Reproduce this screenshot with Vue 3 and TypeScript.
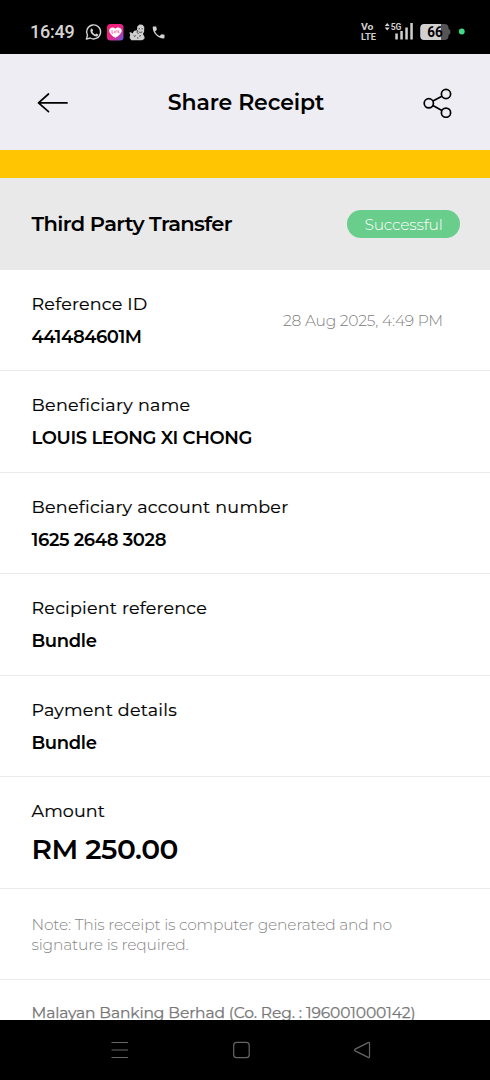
<script setup lang="ts">
import type { Directive } from 'vue'

interface Detail {
  label: string
  labelWidth: number
  value: string
  valueWidth: number
  date?: string
}

const details: Detail[] = [
  { label: 'Reference ID', labelWidth: 116, value: '441484601M', valueWidth: 110, date: '28 Aug 2025, 4:49 PM' },
  { label: 'Beneficiary name', labelWidth: 159, value: 'LOUIS LEONG XI CHONG', valueWidth: 220.5 },
  { label: 'Beneficiary account number', labelWidth: 257, value: '1625 2648 3028', valueWidth: 134.5 },
  { label: 'Recipient reference', labelWidth: 175.5, value: 'Bundle', valueWidth: 65 },
  { label: 'Payment details', labelWidth: 145.5, value: 'Bundle', valueWidth: 65 },
]

// Tracks a line of text so that it spans the given width.
const vFit: Directive<HTMLElement, number> = {
  mounted(el, { value }) {
    const count = el.textContent?.length || 1
    el.style.letterSpacing = `${(value - el.getBoundingClientRect().width) / count}px`
  },
}
</script>

<template>
  <div class="screen">
    <div class="status">
      <span v-fit="44.5" class="fit clock">16:49</span>
      <svg class="status-left" width="84" height="20" viewBox="84 21.500 84 20">
        <path d="M86.4 38.6l1.1-3.8a7 7 0 1 1 2.7 2.7z" fill="none" stroke="#d2d2d2" stroke-width="1.4" stroke-linejoin="round" />
        <path d="M91 28.2c.5-.5 1.1-.4 1.4.2l.7 1.5c.1.4-.6 1-.7 1.3.5 1.2 1.5 2.1 2.8 2.7.5-.1.9-1.1 1.3-.9l1.7.9c.4.5-.5 2-1.6 2.1-2.7.1-6.2-3.2-6.2-5.7 0-.8.2-1.6.6-2.1z" fill="#d2d2d2" />
        <defs>
          <linearGradient id="heart-bg" x1="0" y1="0" x2="1" y2="1">
            <stop offset="0.35" stop-color="#f51e7b" />
            <stop offset="0.7" stop-color="#c832a0" />
            <stop offset="1" stop-color="#4b62ee" />
          </linearGradient>
        </defs>
        <rect x="107" y="23.500" width="16.500" height="16.500" rx="3.500" fill="url(#heart-bg)" />
        <path d="M115.300 37.300c-2-1.300-5.900-3.900-6.200-7.100-.2-3 4-4.600 6.200-2 2.200-2.600 6.600-1 6.400 2-.2 3.200-4.300 5.800-6.400 7.100z" fill="#fff" />
        <path d="M112 29.500v3.200h1.300m1-2.300v2.300m1.500-2.300v2.300m0-2.300h1.300m1-1v3.300m1.300-2.500l-1 1 1 1.500" fill="none" stroke="#ed4d9b" stroke-width=".7" />
        <path d="M137 29.500l.3-3.500 2.200-1.900 3 .2 1.800 2.200-.2 4.700-1.200 2.300 1.500 2.500.1 2.200-2.400 1.500h-10.800l-1.700-2.500.6-3-.9-2.200 1.600-.2 1.600 1.300 1.500-2.600 1.500-.6z" fill="#d0d0d0" />
        <path d="M138.600 28.300h1.400m1.500 0h1.200M138.600 31.300c1.300.8 2.600.8 3.700 0M137.300 29.500v2.700l1.300 1.400M133.600 35l1.200 1 1-1.200M139.200 35.800l1.700-.8M137 37.400l1.400.2" fill="none" stroke="#222" stroke-width=".8" />
        <path d="M153.400 26h2.800l.7 3.200-1.900 1.700c1.200 2.200 2.500 3.500 4.700 4.600l1.700-1.800 3.100.6v2.800c0 .6-.4.900-.9.900-5.900-.3-10.600-5.300-10.900-11.100 0-.5.200-.9.700-.9z" fill="#d2d2d2" />
      </svg>
      <svg class="status-right" width="110" height="24" viewBox="358 20 110 24">
        <g fill="#cfcfcf" font-family="Roboto, sans-serif" font-weight="700">
          <text x="361" y="30" font-size="9.300" textLength="12.500" lengthAdjust="spacingAndGlyphs">Vo</text>
          <text x="361" y="39.500" font-size="9.500" textLength="15" lengthAdjust="spacingAndGlyphs">LTE</text>
          <text x="390.700" y="30" font-size="9.500" textLength="10.800" lengthAdjust="spacingAndGlyphs">5G</text>
          <path d="M384.700 25.900l2.500-3 2.500 3zm0 1.500l2.500 3 2.500-3zM395.300 33.500h2.500v6h-2.500zM400.300 31h2.500v8.500h-2.500zM405.300 27.500h2.500v12h-2.500zM410.300 23h2.500v16.500h-2.500z" />
        </g>
        <rect x="420.300" y="24" width="28.200" height="16" rx="4" fill="#545454" />
        <path d="M448 28.500l2.300 1.500v3.800l-2.300 1.500z" fill="#545454" />
        <path d="M424.300 24H441v16h-16.700a4 4 0 0 1-4-4v-8a4 4 0 0 1 4-4z" fill="#d0d0d0" />
        <text x="427.300" y="37" font-family="Roboto, sans-serif" font-size="14" font-weight="700" textLength="15.500" lengthAdjust="spacingAndGlyphs">66</text>
        <circle cx="461.800" cy="31.500" r="2.900" fill="#3ddc84" />
      </svg>
    </div>

    <header class="header">
      <svg width="34" height="24" viewBox="36 90 34 24" fill="none" stroke="#000" stroke-width="1.700" stroke-linecap="round" stroke-linejoin="round">
        <path d="M67 102.900H38.500M48.500 94L38.500 102.900l10 8.800" />
      </svg>
      <h1 v-fit="156.5" class="fit">Share Receipt</h1>
      <svg width="32" height="32" viewBox="422 86 32 32" fill="none" stroke="#000" stroke-width="1.700">
        <circle cx="428.800" cy="103.300" r="4.600" />
        <circle cx="446" cy="94" r="4.600" />
        <circle cx="446" cy="112.700" r="4.600" />
        <path d="M432.900 101.100l9-4.900M432.900 105.500l9 5" />
      </svg>
    </header>

    <div class="stripe"></div>

    <section class="title-bar">
      <h2 v-fit="200.5" class="fit">Third Party Transfer</h2>
      <div class="badge"><span v-fit="78" class="fit">Successful</span></div>
    </section>

    <main class="content">
      <section v-for="item in details" :key="item.label" class="row">
        <div class="pair">
          <span v-fit="item.labelWidth" class="fit label">{{ item.label }}</span>
          <span v-fit="item.valueWidth" class="fit value">{{ item.value }}</span>
        </div>
        <span v-if="item.date" v-fit="160" class="fit date">{{ item.date }}</span>
      </section>
      <section class="row amount">
        <div class="pair">
          <span v-fit="73.5" class="fit label">Amount</span>
          <span v-fit="146.5" class="fit total">RM 250.00</span>
        </div>
      </section>
      <section class="note">
        <span v-fit="360.5" class="fit">Note: This receipt is computer generated and no</span>
        <span v-fit="157" class="fit">signature is required.</span>
      </section>
      <footer class="bank">
        <span v-fit="384" class="fit">Malayan Banking Berhad (Co. Reg. : 196001000142)</span>
      </footer>
    </main>

    <nav class="nav">
      <svg width="490" height="60" viewBox="0 1020 490 60" fill="none" stroke="#666" stroke-width="1.200">
        <path d="M111.500 1042.500H128M111.500 1050H128M111.500 1057.500H128" />
        <rect x="233.700" y="1042.300" width="15.500" height="15.400" rx="3" />
        <path d="M368.200 1042.600l-13 6.500q-1.500.9 0 1.800l13 6.500q1.300.5 1.300-1v-12.800q0-1.500-1.300-1z" />
      </svg>
    </nav>
  </div>
</template>

<style>
body {
  margin: 0;
}
</style>

<style scoped>
.screen {
  display: flex;
  flex-direction: column;
  width: 490px;
  height: 1080px;
  overflow: hidden;
  background: #fff;
  color: #000;
  font-family: Montserrat, Inter, sans-serif;
}
.screen svg {
  display: block;
  flex: none;
}
.fit {
  width: max-content;
  flex: none;
  white-space: nowrap;
}
.status {
  display: flex;
  align-items: center;
  height: 54px;
  padding: 9px 22px 0 30px;
  box-sizing: border-box;
  background: #000;
}
.clock {
  color: #d4d4d4;
  font: 500 18px/20px Roboto, sans-serif;
}
.status-left {
  margin-left: 9.5px;
}
.status-right {
  margin-left: auto;
}
.header {
  display: flex;
  align-items: center;
  justify-content: space-between;
  height: 96px;
  padding: 0 36px;
  box-sizing: border-box;
  background: #eeedf3;
}
h1,
h2 {
  margin: 0;
}
.header h1 {
  padding-top: 2px;
  font-size: 22px;
  font-weight: 600;
  line-height: 28px;
}
.stripe {
  height: 28px;
  background: #ffc502;
}
.title-bar {
  display: flex;
  align-items: center;
  justify-content: space-between;
  height: 92px;
  padding: 0 30px 0 31.5px;
  box-sizing: border-box;
  background: #e9e9e9;
}
.title-bar h2 {
  font-size: 21px;
  font-weight: 600;
  line-height: 28px;
}
.badge {
  display: flex;
  justify-content: center;
  width: 113px;
  height: 28px;
  border-radius: 14px;
  background: #69cd8b;
  color: #fff;
  font-size: 15.5px;
  font-weight: 300;
  line-height: 29px;
}
.content {
  flex: 1;
  min-height: 0;
  overflow: hidden;
}
.row {
  display: flex;
  align-items: center;
  justify-content: space-between;
  height: 101.4px;
  padding: 0.7px 47px 0 31.5px;
  box-sizing: border-box;
  border-bottom: 1px solid #ececec;
}
.pair {
  display: flex;
  flex-direction: column;
  gap: 9px;
}
.label,
.value {
  font-size: 17.5px;
  line-height: 24px;
}
.label {
  -webkit-text-stroke: 0.2px #000;
}
.value {
  font-size: 18px;
  font-weight: 600;
}
.date {
  color: #808080;
  font-size: 15.5px;
  font-weight: 300;
}
.amount {
  height: 112px;
  padding-top: 2px;
}
.amount .pair {
  gap: 8px;
}
.total {
  font-size: 28px;
  font-weight: 600;
  line-height: 36px;
}
.note {
  display: flex;
  flex-direction: column;
  height: 91px;
  padding: 26px 31.5px 0;
  box-sizing: border-box;
  border-bottom: 1px solid #ececec;
  color: #858585;
  font-size: 15.5px;
  font-weight: 300;
  line-height: 20px;
}
.bank {
  display: flex;
  padding: 23px 31.5px 0;
  color: #777;
  font-size: 15.5px;
  line-height: 20px;
  -webkit-text-stroke: 0.25px #777;
}
.nav {
  flex: none;
  height: 60px;
  background: #000;
}
</style>
